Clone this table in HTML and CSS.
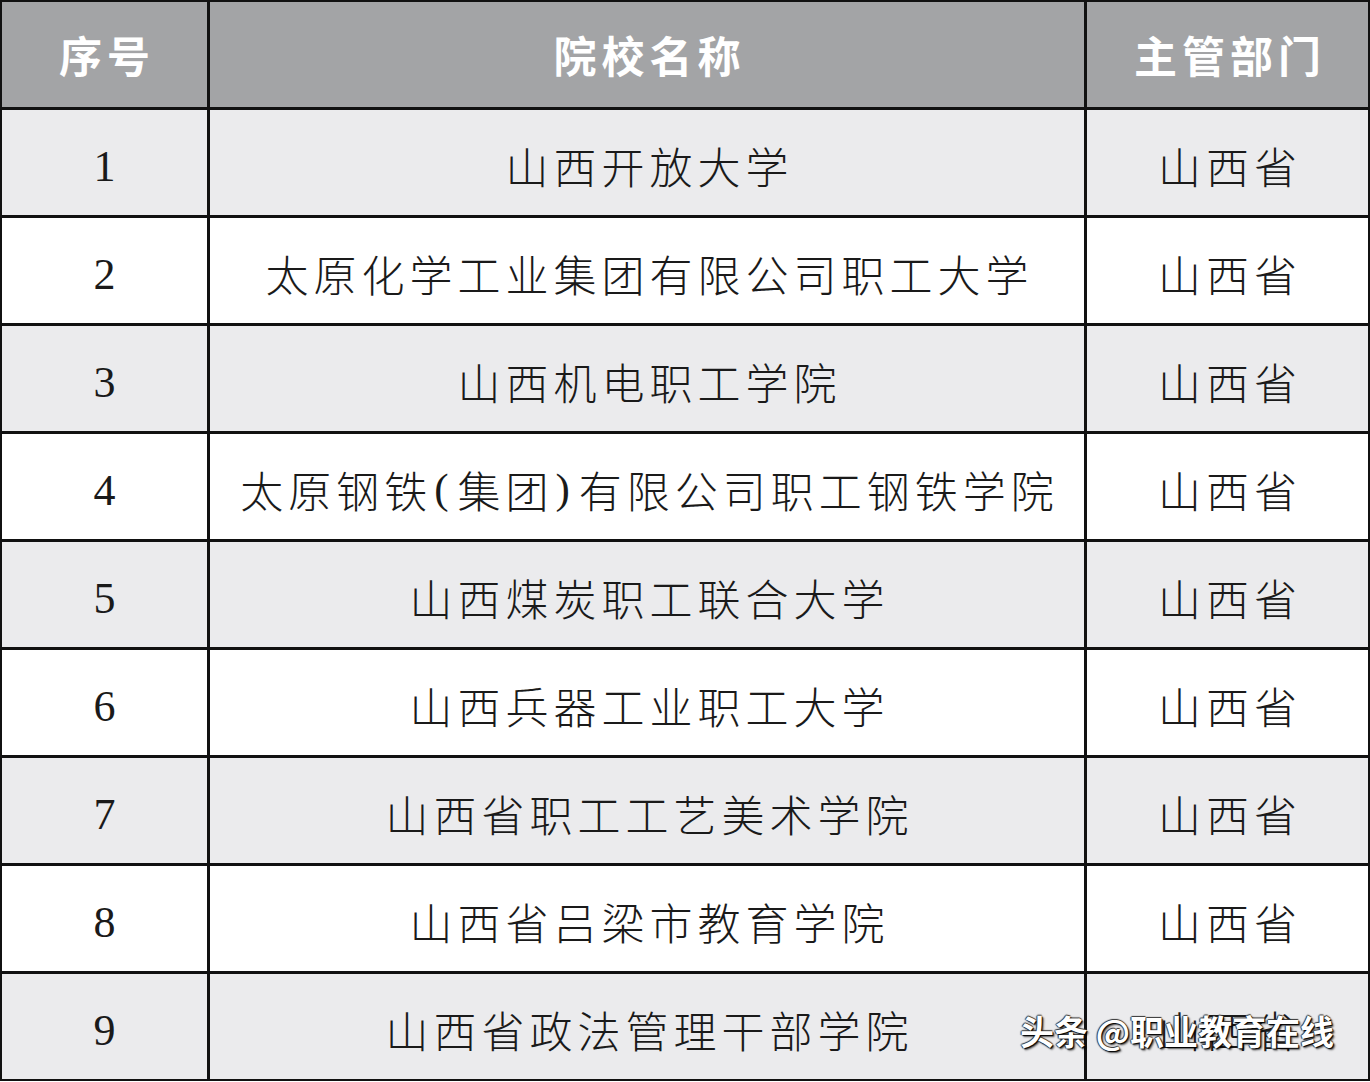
FILE: index.html
```html
<!DOCTYPE html>
<html lang="zh-CN">
<head>
<meta charset="utf-8">
<title>院校名称</title>
<link rel="stylesheet" href="styles.css">
</head>
<body>
<div class="page">
  <div class="grid">
    <div class="cell head">序号</div>
    <div class="cell head">院校名称</div>
    <div class="cell head">主管部门</div>

    <div class="cell odd num">1</div>
    <div class="cell odd">山西开放大学</div>
    <div class="cell odd">山西省</div>

    <div class="cell even num">2</div>
    <div class="cell even">太原化学工业集团有限公司职工大学</div>
    <div class="cell even">山西省</div>

    <div class="cell odd num">3</div>
    <div class="cell odd">山西机电职工学院</div>
    <div class="cell odd">山西省</div>

    <div class="cell even num">4</div>
    <div class="cell even">太原钢铁<span class="paren">(</span>集团<span class="paren">)</span>有限公司职工钢铁学院</div>
    <div class="cell even">山西省</div>

    <div class="cell odd num">5</div>
    <div class="cell odd">山西煤炭职工联合大学</div>
    <div class="cell odd">山西省</div>

    <div class="cell even num">6</div>
    <div class="cell even">山西兵器工业职工大学</div>
    <div class="cell even">山西省</div>

    <div class="cell odd num">7</div>
    <div class="cell odd">山西省职工工艺美术学院</div>
    <div class="cell odd">山西省</div>

    <div class="cell even num">8</div>
    <div class="cell even">山西省吕梁市教育学院</div>
    <div class="cell even">山西省</div>

    <div class="cell odd num">9</div>
    <div class="cell odd">山西省政法管理干部学院</div>
    <div class="cell odd">山西省</div>
  </div>
  <div class="watermark">头条 @职业教育在线</div>
</div>
</body>
</html>
```

FILE: styles.css
```css
html, body {
  margin: 0;
  padding: 0;
  background: #ffffff;
}

.page {
  position: relative;
  width: 1370px;
  height: 1082px;
  overflow: hidden;
}

.grid {
  display: grid;
  grid-template-columns: 205px 874px 281px;
  grid-auto-rows: 105px;
  gap: 3px;
  padding: 2px;
  background: #111111;
  width: 1370px;
  box-sizing: border-box;
}

.cell {
  display: flex;
  align-items: center;
  justify-content: center;
  font-family: "Noto Sans CJK SC", "Noto Sans", sans-serif;
  font-size: 43px;
  font-weight: 300;
  letter-spacing: 5px;
  padding-left: 5px;
  padding-top: 4px;
  color: #1a1a1a;
  white-space: nowrap;
}

.head {
  background: #a3a4a6;
  color: #ffffff;
  font-weight: 700;
  font-size: 43px;
  letter-spacing: 5px;
  padding-top: 0;
  padding-bottom: 2px;
}

.odd {
  background: #ebebed;
}

.even {
  background: #ffffff;
}

.num {
  font-family: "Liberation Serif", "Times New Roman", serif;
  font-size: 44px;
  font-weight: 400;
  letter-spacing: 0;
  padding-left: 0;
  padding-top: 8px;
}

.paren {
  font-family: "Liberation Serif", serif;
  font-weight: 400;
  letter-spacing: 9px;
  margin-left: 2px;
}

.watermark {
  position: absolute;
  left: 1020px;
  top: 1006px;
  font-family: "Noto Sans CJK SC", "Noto Sans", sans-serif;
  font-size: 34px;
  font-weight: 700;
  color: #ffffff;
  letter-spacing: 0;
  text-shadow: 1px 1px 1px #000, -1px 0 1px #333, 0 -1px 1px #333, 2px 2px 2px rgba(0,0,0,0.6);
  white-space: nowrap;
}
```
